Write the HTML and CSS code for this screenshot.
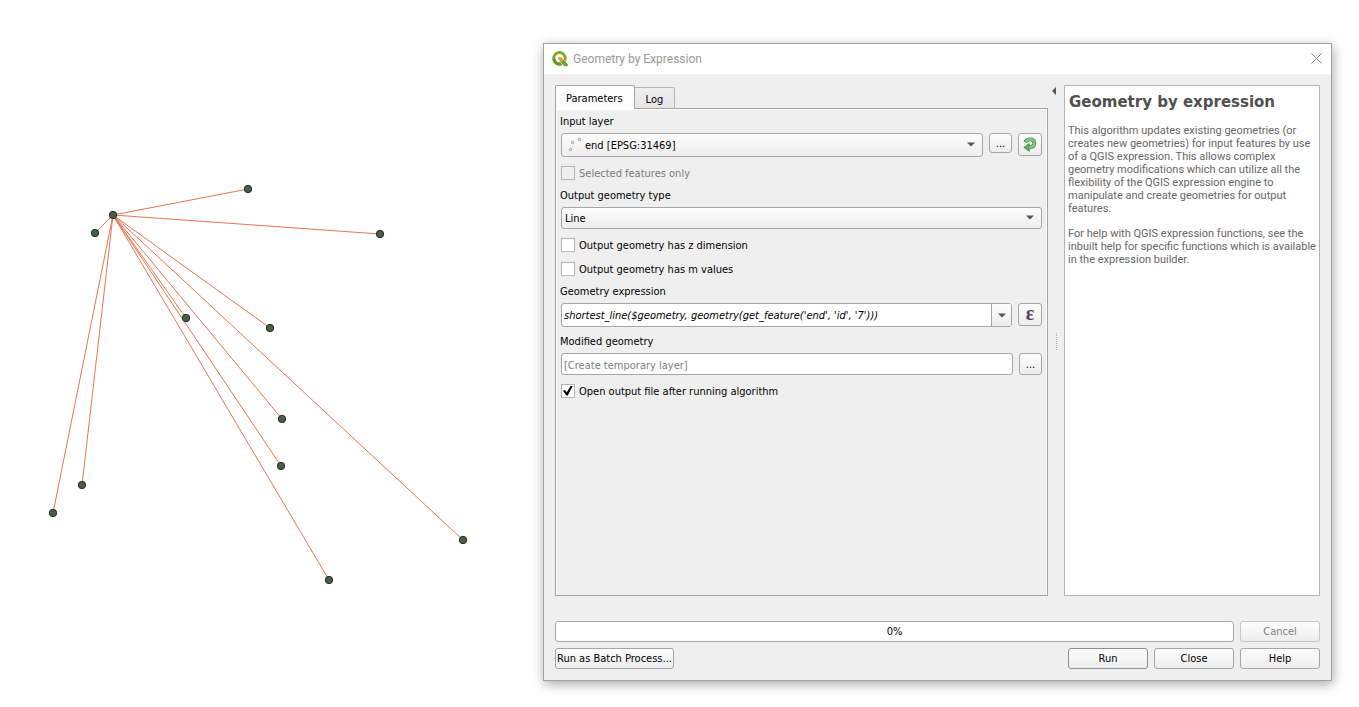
FILE: index.html
```html
<!DOCTYPE html>
<html lang="en">
<head>
<meta charset="utf-8">
<title>Geometry by Expression</title>
<link rel="stylesheet" href="styles.css">
</head>
<body>
<main class="workspace">
  <svg class="map" viewBox="0 0 543 707" role="img" aria-label="Map canvas">
    <g class="map-lines">
      <path d="M95 233L113 215"/>
      <path d="M113 215L248 189M113 215L380 234M113 215L270 328M113 215L186 318M113 215L282 419M113 215L281 466M113 215L463 540M113 215L329 580M113 215L82 485M113 215L53 513"/>
    </g>
    <g class="map-points">
      <circle cx="113" cy="215" r="3.7"/><circle cx="248" cy="189" r="3.7"/><circle cx="380" cy="234" r="3.7"/>
      <circle cx="95" cy="233" r="3.7"/><circle cx="270" cy="328" r="3.7"/><circle cx="186" cy="318" r="3.7"/>
      <circle cx="282" cy="419" r="3.7"/><circle cx="281" cy="466" r="3.7"/><circle cx="463" cy="540" r="3.7"/>
      <circle cx="329" cy="580" r="3.7"/><circle cx="82" cy="485" r="3.7"/><circle cx="53" cy="513" r="3.7"/>
    </g>
  </svg>

  <section class="dialog" role="dialog" aria-labelledby="dialog-title">
    <header class="titlebar">
      <svg class="logo" viewBox="0 0 16 16" aria-hidden="true">
        <circle cx="7.500" cy="7.300" r="5.700" fill="none" stroke="#83a82d" stroke-width="3"/>
        <path d="M1.800 7.800A5.700 5.700 0 0 0 9.500 12.700" fill="none" stroke="#5d9632" stroke-width="3"/>
        <path d="M7.700 8.200h3.600l4.700 4.700v2.600h-3.400l-4.900-4.700z" fill="#68a133" stroke="#fff" stroke-width=".6"/>
        <path d="M6.200 6h3l2.400 2.400-2.600 2.500-2.800-2.600z" fill="#f5b45c"/>
        <path d="M7.200 7h1.600l1.400 1.300-1.300 1.400-1.700-1.300z" fill="#e8762d"/>
      </svg>
      <h1 class="dialog-title" id="dialog-title">Geometry by Expression</h1>
      <button class="close" aria-label="Close window"><svg viewBox="0 0 11 11" aria-hidden="true"><path d="M.5 .5l10 10M10.5 .5l-10 10"/></svg></button>
    </header>

    <div class="content">
      <div class="split">
        <div class="tabs">
          <div class="tablist" role="tablist">
            <button class="tab tab-active" role="tab" aria-selected="true">Parameters</button>
            <button class="tab" role="tab" aria-selected="false">Log</button>
          </div>
          <form class="pane">
            <div class="field">
              <label for="layer">Input layer</label>
              <div class="row">
                <div class="combo combo-tall combo-layer">
                  <svg class="points-icon" viewBox="0 0 14 14" aria-hidden="true"><g fill="#fff" stroke="#888" stroke-width=".9"><circle cx="2.500" cy="12.500" r="1.200"/><circle cx="4.500" cy="5.500" r="1.200"/><circle cx="11.500" cy="2.500" r="1.200"/></g></svg>
                  <select id="layer"><option>end [EPSG:31469]</option></select>
                  <svg class="arrow" viewBox="0 0 8 5" aria-hidden="true"><path d="M0 .5h8l-4 4z"/></svg>
                </div>
                <button type="button" class="btn tool tool-short" aria-label="Browse for layer">...</button>
                <button type="button" class="btn tool tool-tall" aria-label="Iterate over this layer">
                  <svg class="loop-icon" viewBox="0 0 14 15" aria-hidden="true">
                    <path d="M2.300 5.400C3.200 3.200 5 2.400 7.300 2.400c2.500 0 4 1.600 4 3.900 0 2.700-2 4-5.300 4.100" fill="none" stroke="#3d8746" stroke-width="3.800"/>
                    <path d="M.8 10.400l5.500-4v7.900z" fill="#5cab5c" stroke="#3d8746" stroke-width=".8" stroke-linejoin="round"/>
                    <path d="M2.700 5.200C3.500 3.200 5 2.400 7.300 2.400c2.500 0 4 1.600 4 3.900 0 2.700-2 4-5.500 4.100" fill="none" stroke="#7fc578" stroke-width="2.600"/>
                  </svg>
                </button>
              </div>
            </div>
            <label class="check check-disabled"><input type="checkbox" disabled><span>Selected features only</span></label>
            <div class="field">
              <label for="type">Output geometry type</label>
              <div class="combo">
                <select id="type"><option>Line</option></select>
                <svg class="arrow" viewBox="0 0 8 5" aria-hidden="true"><path d="M0 .5h8l-4 4z"/></svg>
              </div>
            </div>
            <label class="check"><input type="checkbox"><span>Output geometry has z dimension</span></label>
            <label class="check"><input type="checkbox"><span>Output geometry has m values</span></label>
            <div class="field">
              <label for="expression">Geometry expression</label>
              <div class="row">
                <div class="editcombo">
                  <input id="expression" type="text" value="shortest_line($geometry, geometry(get_feature('end', 'id', '7')))">
                  <button type="button" class="drop" aria-label="Recent expressions"><svg viewBox="0 0 8 5" aria-hidden="true"><path d="M0 .5h8l-4 4z"/></svg></button>
                </div>
                <button type="button" class="btn tool tool-tall epsilon" aria-label="Expression builder">ε</button>
              </div>
            </div>
            <div class="field">
              <label for="output">Modified geometry</label>
              <div class="row">
                <input class="textbox" id="output" type="text" placeholder="[Create temporary layer]">
                <button type="button" class="btn tool" aria-label="Choose output">...</button>
              </div>
            </div>
            <label class="check"><input type="checkbox" checked><span>Open output file after running algorithm</span></label>
          </form>
        </div>

        <div class="splitter">
          <button class="collapse" aria-label="Hide help"><svg viewBox="0 0 4 8" aria-hidden="true"><path d="M4 0v8l-4-4z"/></svg></button>
          <span class="grip"></span>
        </div>

        <article class="help">
          <h2>Geometry by expression</h2>
          <p>This algorithm updates existing geometries (or creates new geometries) for input features by use of a QGIS expression. This allows complex geometry modifications which can utilize all the flexibility of the QGIS expression engine to manipulate and create geometries for output features.</p>
          <p>For help with QGIS expression functions, see the inbuilt help for specific functions which is available in the expression builder.</p>
        </article>
      </div>

      <footer class="footer">
        <div class="row">
          <div class="progress" role="progressbar" aria-valuenow="0" aria-valuemin="0" aria-valuemax="100">0%</div>
          <button class="btn action" disabled>Cancel</button>
        </div>
        <div class="row">
          <button class="btn batch">Run as Batch Process...</button>
          <button class="btn action action-default">Run</button>
          <button class="btn action">Close</button>
          <button class="btn action">Help</button>
        </div>
      </footer>
    </div>
  </section>
</main>
</body>
</html>
```
FILE: styles.css
```css
* { box-sizing: border-box; }

body {
  margin: 0;
  background: #fff;
  color: #000;
  font: 11px/14px Tahoma, "DejaVu Sans Condensed", "DejaVu Sans", sans-serif;
}

button, input, select { font: inherit; color: inherit; margin: 0; }

.workspace { display: flex; min-height: 100vh; }

.map { flex: 0 1 543px; min-width: 0; align-self: flex-start; }
.map-lines { fill: none; stroke: #ea7450; stroke-width: 1; }
.map-points { fill: #485f45; stroke: #232e25; stroke-width: 1; }

.dialog {
  flex: 1;
  display: flex;
  flex-direction: column;
  margin: 43px 27px 26px 0;
  border: 1px solid #a0a0a0;
  background: #efefef;
  box-shadow: 1px 3px 11px rgba(0, 0, 0, .35);
}

.titlebar {
  display: flex;
  align-items: center;
  gap: 5px;
  height: 30px;
  padding: 0 9px 0 8px;
  background: #fff;
}
.logo { width: 16px; height: 16px; }
.dialog-title {
  flex: 1;
  margin: 0;
  color: #999;
  font: 12px/16px "Segoe UI", Roboto, sans-serif;
}
.close { display: flex; padding: 0 0 2px; border: 0; background: none; }
.close svg { width: 11px; height: 11px; fill: none; stroke: #888; }

.content {
  flex: 1;
  display: flex;
  flex-direction: column;
  gap: 25px;
  padding: 11px;
}
.split { flex: 1; display: flex; }

.tabs { flex: 1; display: flex; flex-direction: column; min-width: 0; }
.tablist { display: flex; align-items: flex-end; height: 24px; margin-bottom: -1px; }
.tab {
  height: 22px;
  padding: 3px 11px 0;
  border: 1px solid #b4b4b4;
  border-left: 0;
  border-radius: 0 2px 0 0;
  background: linear-gradient(#eee, #e5e5e5);
}
.tab-active {
  position: relative;
  height: 24px;
  padding-left: 10px;
  border: 1px solid #a4a4a4;
  border-bottom: 0;
  border-radius: 2px 2px 0 0;
  background: #fcfcfc;
}
.pane {
  flex: 1;
  display: flex;
  flex-direction: column;
  gap: 7px;
  padding: 5px 5px 5px 4px;
  border: 1px solid #a4a4a4;
  box-shadow: inset 1px 1px #fff, inset -1px 0 #fff;
}

.field { display: flex; flex-direction: column; gap: 4px; }
.field > label { margin-top: 1px; }
.row { display: flex; align-items: flex-start; gap: 6px; }

.btn, .combo select, .textbox, .editcombo, .progress {
  border: 1px solid #a6a6a6;
  border-radius: 3px;
}
.btn, .combo select { background: linear-gradient(#fdfdfd, #ededed); }
.textbox, .editcombo, .progress { background: #fff; }

.combo { position: relative; flex: 1; margin-left: 1px; }
.combo select {
  display: block;
  width: 100%;
  height: 22px;
  padding: 2px 24px 0 3px;
  appearance: none;
}
.combo-tall select { height: 24px; }
.combo-layer select { padding-left: 23px; }
.points-icon { position: absolute; left: 7px; top: 4px; width: 14px; height: 14px; }
.arrow { position: absolute; right: 8px; top: calc(50% - 3px); width: 8px; height: 5px; fill: #555; }

.tool { flex: none; width: 23px; height: 22px; padding: 2px 0 0; }
.tool-short { height: 20px; }
.tool-tall { display: grid; place-items: center; width: 24px; height: 23px; padding: 0; }
.loop-icon { width: 14px; height: 15px; }
.epsilon { padding-bottom: 4px; color: #5b3b66; font: bold 20px/16px "Liberation Serif", serif; }

.check { display: flex; align-items: center; gap: 4px; height: 17px; margin-left: 1px; }
.check span { padding-top: 2px; }
.check input {
  width: 14px;
  height: 14px;
  border: 1px solid #b4b4b4;
  background: #fff;
  appearance: none;
}
.check input:checked::before {
  content: "";
  display: block;
  width: 10px;
  height: 10px;
  margin: 1px;
  background: #000;
  clip-path: polygon(0 52%, 18% 44%, 38% 68%, 78% 0, 100% 0, 48% 100%, 34% 100%);
}
.check-disabled { color: #7a7a7a; }
.check-disabled input { background: #efefef; }

.editcombo { flex: 1; display: flex; height: 24px; margin-left: 1px; overflow: hidden; }
.editcombo input { flex: 1; min-width: 0; padding: 2px 3px 0 2px; border: 0; background: none; font-style: italic; }
.drop {
  display: grid;
  place-items: center;
  width: 20px;
  padding: 0;
  border: 0;
  border-left: 1px solid #a6a6a6;
  background: linear-gradient(#fdfdfd, #ededed);
}
.drop svg { width: 8px; height: 5px; fill: #555; }
.textbox { flex: 1; min-width: 0; height: 22px; margin-left: 1px; padding: 2px 2px 0; }
.textbox::placeholder { color: #808080; opacity: 1; }

.splitter { position: relative; flex: none; width: 16px; }
.collapse { position: absolute; left: 4px; top: 2px; display: flex; padding: 0; border: 0; background: none; }
.collapse svg { width: 4px; height: 8px; fill: #555; }
.grip {
  position: absolute;
  left: 8px;
  top: calc(50% - 8px);
  height: 17px;
  border-left: 1px dotted #aaa;
}

.help {
  flex: 0 0 256px;
  padding: 6px 0 4px 3px;
  border: 1px solid #b4b4b4;
  background: #fff;
  color: #666;
  font: 11px/13px Tahoma, Roboto, sans-serif;
}
.help h2 {
  margin: 0 1px 12px;
  color: #505050;
  font: bold 15px/20px "DejaVu Sans", sans-serif;
}
.help p { margin: 0 0 12px; }

.footer { display: flex; flex-direction: column; gap: 6px; }
.progress { flex: 1; height: 21px; line-height: 20px; text-align: center; }
.action, .batch { height: 21px; padding: 1px 0 0; }
.action { width: 80px; }
.action-default { border-color: #8e8e8e; }
.btn:disabled { border-color: #c4c4c4; color: #808080; }
.batch { margin-right: auto; padding: 1px 1px 0; }
```
